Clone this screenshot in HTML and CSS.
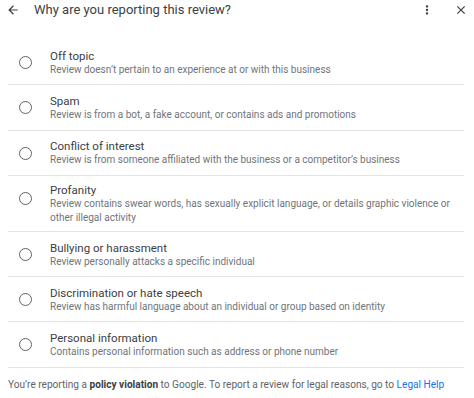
FILE: index.html
```html
<!DOCTYPE html>
<html>
<head>
<meta charset="utf-8">
<link rel="stylesheet" href="styles.css">
</head>
<body>
<div class="dialog">
  <header class="header">
    <button class="icon-btn back" aria-label="Back">
      <svg width="14" height="14" viewBox="0 0 24 24"><path d="M20 11H7.83l5.59-5.59L12 4l-8 8 8 8 1.41-1.41L7.83 13H20v-2z" fill="#3c4043"/></svg>
    </button>
    <h1 class="title">Why are you reporting this review?</h1>
    <button class="icon-btn more" aria-label="More">
      <svg width="14" height="14" viewBox="0 0 24 24"><path d="M12 8c1.1 0 2-.9 2-2s-.9-2-2-2-2 .9-2 2 .9 2 2 2zm0 2c-1.1 0-2 .9-2 2s.9 2 2 2 2-.9 2-2-.9-2-2-2zm0 6c-1.1 0-2 .9-2 2s.9 2 2 2 2-.9 2-2-.9-2-2-2z" fill="#3c4043"/></svg>
    </button>
    <button class="icon-btn close" aria-label="Close">
      <svg width="14" height="14" viewBox="0 0 24 24"><path d="M19 6.41 17.59 5 12 10.59 6.41 5 5 6.41 10.59 12 5 17.59 6.41 19 12 13.41 17.59 19 19 17.59 13.41 12z" fill="#3c4043"/></svg>
    </button>
  </header>

  <ul class="options">
    <li class="option">
      <span class="radio"></span>
      <div class="text">
        <div class="opt-title">Off topic</div>
        <div class="opt-desc">Review doesn’t pertain to an experience at or with this business</div>
      </div>
    </li>
    <li class="option">
      <span class="radio"></span>
      <div class="text">
        <div class="opt-title">Spam</div>
        <div class="opt-desc">Review is from a bot, a fake account, or contains ads and promotions</div>
      </div>
    </li>
    <li class="option">
      <span class="radio"></span>
      <div class="text">
        <div class="opt-title">Conflict of interest</div>
        <div class="opt-desc">Review is from someone affiliated with the business or a competitor’s business</div>
      </div>
    </li>
    <li class="option">
      <span class="radio"></span>
      <div class="text">
        <div class="opt-title">Profanity</div>
        <div class="opt-desc">Review contains swear words, has sexually explicit language, or details graphic violence or other illegal activity</div>
      </div>
    </li>
    <li class="option">
      <span class="radio"></span>
      <div class="text">
        <div class="opt-title">Bullying or harassment</div>
        <div class="opt-desc">Review personally attacks a specific individual</div>
      </div>
    </li>
    <li class="option">
      <span class="radio"></span>
      <div class="text">
        <div class="opt-title">Discrimination or hate speech</div>
        <div class="opt-desc">Review has harmful language about an individual or group based on identity</div>
      </div>
    </li>
    <li class="option">
      <span class="radio"></span>
      <div class="text">
        <div class="opt-title">Personal information</div>
        <div class="opt-desc">Contains personal information such as address or phone number</div>
      </div>
    </li>
  </ul>

  <p class="footer">You’re reporting a <b>policy violation</b> to Google. To report a review for legal reasons, go to <a href="#" class="link">Legal Help</a></p>
</div>
</body>
</html>
```

FILE: styles.css
```css
* { box-sizing: border-box; }
html, body { margin: 0; padding: 0; background: #fff; }
body {
  font-family: Roboto, "Liberation Sans", Arial, sans-serif;
  color: #3c4043;
  width: 474px;
  height: 398px;
  overflow: hidden;
}
.dialog { display: flex; flex-direction: column; }
.header {
  display: flex;
  align-items: center;
  height: 20px;
  padding: 0 3px 0 6px;
}
.icon-btn {
  border: 0;
  background: none;
  padding: 0;
  width: 14px;
  height: 14px;
  display: flex;
  align-items: center;
  justify-content: center;
  cursor: pointer;
}
.title {
  flex: 1;
  margin: 0 0 0 14px;
  font-size: 13px;
  font-weight: 400;
  color: #3c4043;
  line-height: 20px;
}
.more { margin-right: 20px; }
.close { margin-right: 3px; }
.options {
  list-style: none;
  margin: 20px 10px 0 8px;
  padding: 0;
}
.option {
  display: flex;
  align-items: stretch;
  padding: 0 0 0 11px;
  border-bottom: 1px solid #e3e3e3;
}
.radio {
  flex: none;
  width: 13px;
  height: 13px;
  border: 1.5px solid #5f6368;
  border-radius: 50%;
  margin-top: 16px;
  margin-right: 18px;
}
.text {
  flex: 1;
  min-height: 44.3px;
  padding: 7px 12px 6px 0;
  display: flex;
  flex-direction: column;
  justify-content: center;
}
.opt-title {
  font-size: 11.5px;
  line-height: 14px;
  color: #3c4043;
}
.opt-desc {
  font-size: 10px;
  line-height: 14px;
  color: #70757a;
}
.footer {
  margin: 10px 8px 0;
  font-size: 10.1px;
  line-height: 14px;
  color: #5f6368;
}
.footer b { font-weight: 700; color: #3c4043; }
.link { color: #1a73e8; text-decoration: none; }
```
